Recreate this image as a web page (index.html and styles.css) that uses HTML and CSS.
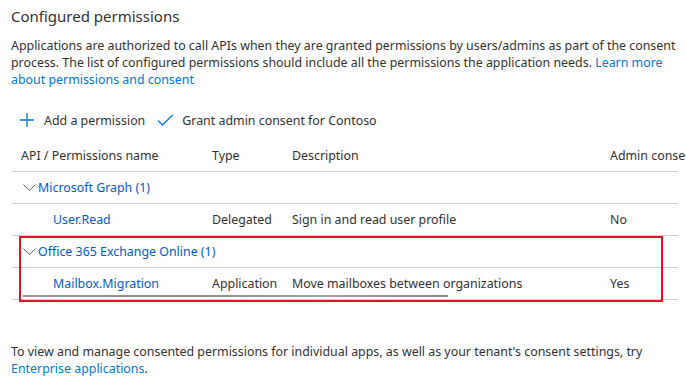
FILE: index.html
```html
<!DOCTYPE html>
<html lang="en">
<head>
  <meta charset="UTF-8">
  <meta name="viewport" content="width=device-width, initial-scale=1.0">
  <title>Configured permissions</title>
  <link rel="stylesheet" href="styles.css">
</head>
<body>
  <section class="permissions">
    <h2 class="title">Configured permissions</h2>
    <p class="intro">Applications are authorized to call APIs when they are granted permissions by users/admins as part of the consent process. The list of configured permissions should include all the permissions the application needs. <a href="#">Learn more about permissions and consent</a></p>

    <div class="toolbar">
      <button class="tool-btn">
        <svg width="16" height="16" viewBox="0 0 16 16" aria-hidden="true"><path d="M8 1v14M1 8h14" stroke="#0078d4" stroke-width="1.3" fill="none"/></svg>
        Add a permission
      </button>
      <button class="tool-btn">
        <svg width="16" height="12" viewBox="0 0 16 12" aria-hidden="true"><path d="M1 6.5l4.5 4.5L15.5 1" stroke="#0078d4" stroke-width="1.3" fill="none"/></svg>
        Grant admin consent for Contoso
      </button>
    </div>

    <div class="grid">
      <div class="row head">
        <span>API / Permissions name</span>
        <span>Type</span>
        <span>Description</span>
        <span>Admin consent required</span>
      </div>

      <div class="row group">
        <span class="api"><svg width="13" height="7" viewBox="0 0 13 7" aria-hidden="true"><path d="M0.5 0.5l6 6 6-6" stroke="#605e5c" stroke-width="1" fill="none"/></svg>Microsoft Graph (1)</span>
      </div>
      <div class="row">
        <a class="perm" href="#">User.Read</a>
        <span>Delegated</span>
        <span>Sign in and read user profile</span>
        <span>No</span>
      </div>

      <div class="marked">
        <div class="row group">
          <span class="api"><svg width="13" height="7" viewBox="0 0 13 7" aria-hidden="true"><path d="M0.5 0.5l6 6 6-6" stroke="#605e5c" stroke-width="1" fill="none"/></svg>Office 365 Exchange Online (1)</span>
        </div>
        <div class="row">
          <a class="perm" href="#">Mailbox.Migration</a>
          <span>Application</span>
          <span>Move mailboxes between organizations</span>
          <span>Yes</span>
        </div>
        <div class="smear"></div>
        <div class="highlight"></div>
      </div>
    </div>

    <p class="note">To view and manage consented permissions for individual apps, as well as your tenant's consent settings, try <a href="#">Enterprise applications</a>.</p>
  </section>
</body>
</html>
```

FILE: styles.css
```css
html, body {
  overflow: hidden;
}
body {
  margin: 0;
  background: #fff;
  color: #323130;
  font-family: "Segoe UI", "Noto Sans", sans-serif;
  font-size: 12.4px;
}
a {
  color: #0078d4;
  text-decoration: none;
}
.permissions {
  padding: 4px 0 0 11px;
  width: 667px;
}
.title {
  margin: 0;
  font-size: 15px;
  font-weight: 400;
  line-height: 24px;
}
.intro {
  margin: 9px 0 0;
  line-height: 17px;
  width: 672px;
}
.toolbar {
  display: flex;
  gap: 12px;
  margin-top: 20px;
  padding-left: 8px;
  height: 24px;
  align-items: center;
}
.tool-btn {
  display: flex;
  align-items: center;
  gap: 9px;
  background: none;
  border: 0;
  padding: 0;
  font: inherit;
  color: #323130;
}
.grid {
  margin-top: 8px;
}
.row {
  display: grid;
  grid-template-columns: 191px 80px 318px 1fr;
  align-items: center;
  height: 31px;
  padding-left: 10px;
  border-bottom: 1px solid #d2d0ce;
  white-space: nowrap;
}
.row.group {
  grid-template-columns: 1fr;
}
.api {
  display: flex;
  align-items: center;
  gap: 2px;
  color: #005ccc;
  margin-left: 2px;
}
.perm {
  color: #005ccc;
  padding-left: 32px;
}
.marked {
  position: relative;
}
.highlight {
  position: absolute;
  top: 0;
  left: 8px;
  width: 640px;
  height: 62px;
  border: 2px solid #e81123;
}
.smear {
  position: absolute;
  left: 12px;
  top: 59px;
  width: 425px;
  height: 2px;
  background: linear-gradient(90deg, #9a97a8, #8c8a8a 40%, #a3a0b0 70%, #7f8a8a);
}
.note {
  margin: 43px 0 0;
  line-height: 17px;
  width: 680px;
}
```
